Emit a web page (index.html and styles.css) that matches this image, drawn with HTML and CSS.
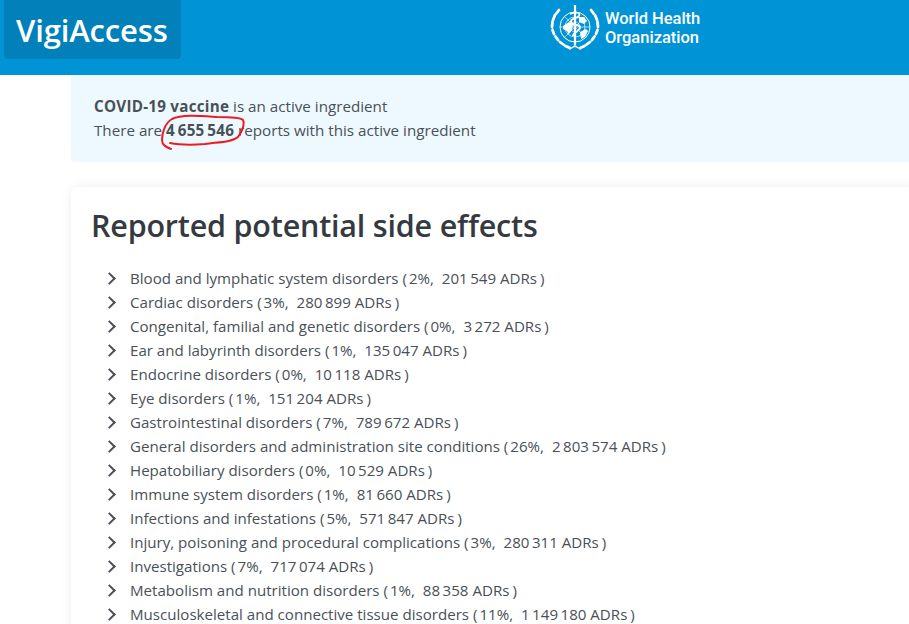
FILE: index.html
```html
<!DOCTYPE html>
<html lang="en">
<head>
<meta charset="utf-8">
<title>VigiAccess</title>
<link rel="stylesheet" href="styles.css">
</head>
<body>
<header class="topbar">
  <a class="brand">VigiAccess</a>
  <div class="who">
    <svg class="who-emblem" viewBox="0 0 52 48" width="52" height="48" aria-hidden="true">
      <g fill="none" stroke="#fff">
        <circle cx="26" cy="23" r="15" stroke-width="1"/>
        <circle cx="26" cy="23" r="10" stroke-width=".7"/>
        <circle cx="26" cy="23" r="5" stroke-width=".6"/>
        <path d="M11 23H41M15.400 12.400 36.600 33.600M36.600 12.400 15.400 33.600" stroke-width=".6"/>
        <path d="M26 1V41" stroke-width="2.200"/>
        <path d="M21 10c6-3 11-1 9 2s-9 2-8 6 10 2 9 6-7 4-7 8" stroke-width="1.800"/>
        <g stroke-width="2.800" stroke-linecap="round">
          <path d="M10 6 7 10M6 11 4 16M3.500 18 3 23M3.500 26 5 30M6.500 32.500 9 36M11 38 15 41M16.500 42 21 44"/>
          <path d="M42 6 45 10M46 11 48 16M48.500 18 49 23M48.500 26 47 30M45.500 32.500 43 36M41 38 37 41M35.500 42 31 44"/>
        </g>
        <path d="M20 45c3-1 4-2 6-3 2 1 3 2 6 3" stroke-width="1.400"/>
      </g>
      <path d="M14 22l6-4 4 2-1 6-3 4-2-3-4-2zM31 28l6-3 2 2-3 6-4 2zM30 13l5 0 3 4-3 3-5-2z" fill="#fff"/>
    </svg>
    <div class="who-name">World Health<br>Organization</div>
  </div>
</header>
<main class="content">
  <section class="notice">
    <p><strong>COVID-19 vaccine</strong> is an active ingredient</p>
    <p>There are <strong>4&#8201;655&#8201;546</strong> reports with this active ingredient</p>
    <svg class="scribble" viewBox="0 0 90 40" width="90" height="40" aria-hidden="true">
      <path d="M11 35C6 33 2 31 2 26 2 19 5 9 12 5 22 0 42 2 57 3 68 3 80 3 83 6 85 10 82 18 78 23 72 28 60 28 45 30 32 31 20 31 10 29" fill="none" stroke="#ea1c24" stroke-width="2" stroke-linecap="round"/>
    </svg>
  </section>
  <section class="card">
    <h1>Reported potential side effects</h1>
    <ul class="effects">
      <li>Blood and lymphatic system disorders <span class="stat">(<span class="pct">2%,</span> <span class="adr">201&#8201;549 ADRs</span>)</span></li>
      <li>Cardiac disorders <span class="stat">(<span class="pct">3%,</span> <span class="adr">280&#8201;899 ADRs</span>)</span></li>
      <li>Congenital, familial and genetic disorders <span class="stat">(<span class="pct">0%,</span> <span class="adr">3&#8201;272 ADRs</span>)</span></li>
      <li>Ear and labyrinth disorders <span class="stat">(<span class="pct">1%,</span> <span class="adr">135&#8201;047 ADRs</span>)</span></li>
      <li>Endocrine disorders <span class="stat">(<span class="pct">0%,</span> <span class="adr">10&#8201;118 ADRs</span>)</span></li>
      <li>Eye disorders <span class="stat">(<span class="pct">1%,</span> <span class="adr">151&#8201;204 ADRs</span>)</span></li>
      <li>Gastrointestinal disorders <span class="stat">(<span class="pct">7%,</span> <span class="adr">789&#8201;672 ADRs</span>)</span></li>
      <li>General disorders and administration site conditions <span class="stat">(<span class="pct">26%,</span> <span class="adr">2&#8201;803&#8201;574 ADRs</span>)</span></li>
      <li>Hepatobiliary disorders <span class="stat">(<span class="pct">0%,</span> <span class="adr">10&#8201;529 ADRs</span>)</span></li>
      <li>Immune system disorders <span class="stat">(<span class="pct">1%,</span> <span class="adr">81&#8201;660 ADRs</span>)</span></li>
      <li>Infections and infestations <span class="stat">(<span class="pct">5%,</span> <span class="adr">571&#8201;847 ADRs</span>)</span></li>
      <li>Injury, poisoning and procedural complications <span class="stat">(<span class="pct">3%,</span> <span class="adr">280&#8201;311 ADRs</span>)</span></li>
      <li>Investigations <span class="stat">(<span class="pct">7%,</span> <span class="adr">717&#8201;074 ADRs</span>)</span></li>
      <li>Metabolism and nutrition disorders <span class="stat">(<span class="pct">1%,</span> <span class="adr">88&#8201;358 ADRs</span>)</span></li>
      <li>Musculoskeletal and connective tissue disorders <span class="stat">(<span class="pct">11%,</span> <span class="adr">1&#8201;149&#8201;180 ADRs</span>)</span></li>
    </ul>
  </section>
</main>
</body>
</html>
```
FILE: styles.css
```css
* { box-sizing: border-box; }
html, body { height: 100%; }
body {
  margin: 0;
  overflow: hidden;
  background: #fff;
  color: #495057;
  font-family: "Open Sans", "Noto Sans", sans-serif;
  font-size: 15px;
  line-height: 24px;
}
.topbar {
  display: flex;
  align-items: flex-start;
  height: 75px;
  padding-left: 4px;
  background: #0093d5;
}
.brand {
  display: block;
  width: 177px;
  height: 59px;
  padding-left: 12px;
  background: #0280b9;
  border-radius: 0 0 4px 4px;
  color: #fff;
  font-size: 31px;
  line-height: 60px;
  font-weight: 600;
  letter-spacing: -.15px;
}
.who {
  display: flex;
  align-items: center;
  gap: 4px;
  margin: 4px 0 0 368px;
  color: #fff;
}
.who-name {
  width: 96px;
  font-family: "Roboto", sans-serif;
  font-size: 16px;
  line-height: 19px;
  font-weight: 500;
  white-space: nowrap;
  transform: scaleX(1.03);
  transform-origin: left center;
}
.content {
  margin: 0 -12px 0 71px;
}
.notice {
  position: relative;
  height: 87px;
  padding: 19px 23px;
  background: #eef9ff;
  border-radius: 0 0 4px 4px;
  font-size: 15.2px;
}
.notice p { margin: 0; }
.notice strong {
  font-weight: 700;
  letter-spacing: .25px;
}
.scribble {
  position: absolute;
  left: 89px;
  top: 39px;
}
.card {
  height: 460px;
  margin-top: 25px;
  padding: 15px 20px;
  background: #fff;
  border-radius: 6px;
  box-shadow: 0 0 12px rgba(0, 0, 0, .07);
}
h1 {
  margin: 0 0 18px;
  color: #343a40;
  font-size: 30.5px;
  line-height: 46px;
  font-weight: 600;
  letter-spacing: -.2px;
}
.effects {
  margin: 0;
  padding: 0 0 0 39px;
  list-style: none;
}
.effects li {
  position: relative;
  white-space: nowrap;
  font-size: 15.1px;
}
.effects li::before {
  content: "";
  position: absolute;
  left: -25px;
  top: 8px;
  width: 7px;
  height: 7px;
  border-top: 2.5px solid #495057;
  border-right: 2.5px solid #495057;
  transform: rotate(45deg);
}
.pct { margin-left: 2px; }
.adr { margin: 0 3px 0 4px; }
```
